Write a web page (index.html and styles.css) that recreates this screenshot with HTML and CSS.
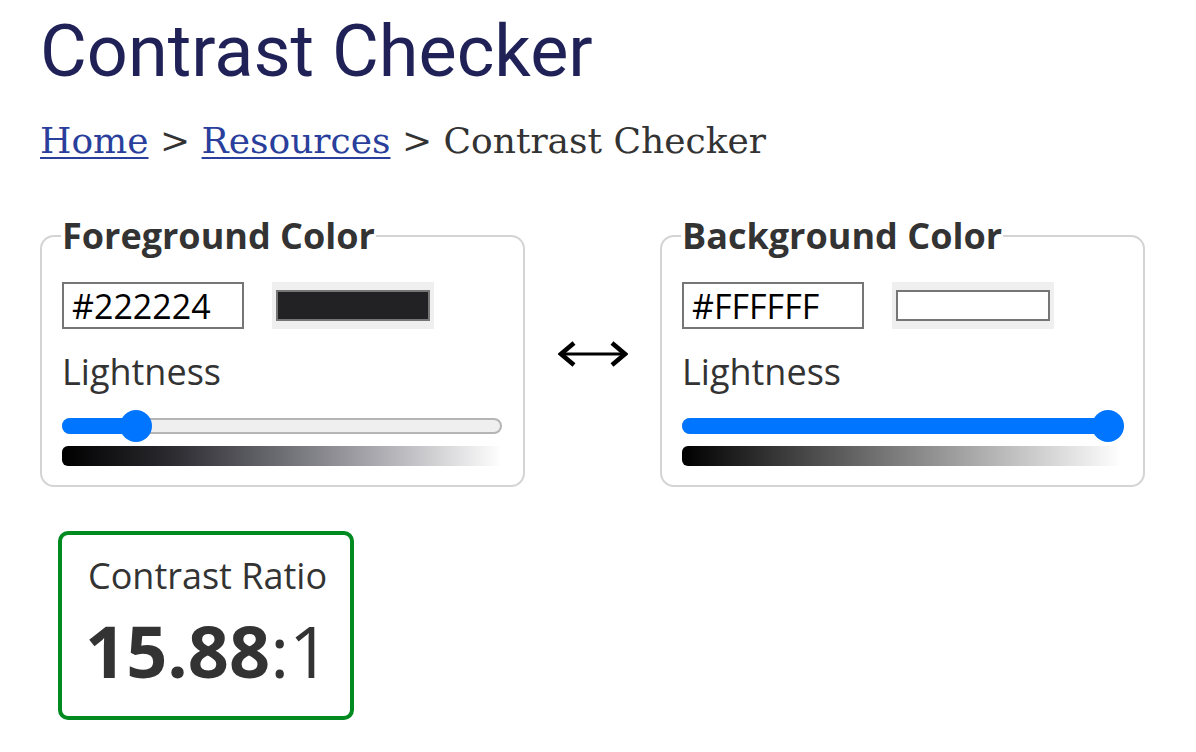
FILE: index.html
```html
<!DOCTYPE html>
<html lang="en">
<head>
<meta charset="utf-8">
<title>Contrast Checker</title>
<link rel="stylesheet" href="styles.css">
</head>
<body>
<main class="page">
  <h1 class="title">Contrast Checker</h1>
  <nav class="crumbs"><a href="#">Home</a> &gt; <a href="#">Resources</a> &gt; Contrast Checker</nav>

  <div class="pickers">
    <fieldset class="picker">
      <legend>Foreground Color</legend>
      <div class="row">
        <input class="hex" type="text" value="#222224">
        <span class="swatch-wrap"><span class="swatch fg"></span></span>
      </div>
      <div class="label">Lightness</div>
      <div class="slider">
        <div class="fill" style="width: 72px"></div>
        <div class="thumb" style="left: 56px"></div>
      </div>
      <div class="grad grad-fg"></div>
    </fieldset>

    <div class="swap">
      <svg width="70" height="30" viewBox="0 0 70 30" aria-hidden="true">
        <path d="M4 15 H66" stroke="#000" stroke-width="3" fill="none"/>
        <path d="M16 4 L3 15 L16 26" stroke="#000" stroke-width="4.5" fill="none" stroke-linejoin="miter" stroke-linecap="butt"/>
        <path d="M54 4 L67 15 L54 26" stroke="#000" stroke-width="4.5" fill="none" stroke-linejoin="miter" stroke-linecap="butt"/>
      </svg>
    </div>

    <fieldset class="picker">
      <legend>Background Color</legend>
      <div class="row">
        <input class="hex" type="text" value="#FFFFFF">
        <span class="swatch-wrap"><span class="swatch bg"></span></span>
      </div>
      <div class="label">Lightness</div>
      <div class="slider">
        <div class="fill fill-full"></div>
        <div class="thumb" style="left: 408px"></div>
      </div>
      <div class="grad grad-bg"></div>
    </fieldset>
  </div>

  <div class="ratio">
    <div class="ratio-label">Contrast Ratio</div>
    <div class="ratio-value"><b>15.88</b>:1</div>
  </div>
</main>
</body>
</html>
```

FILE: styles.css
```css
html, body {
  margin: 0;
  padding: 0;
  background: #fff;
}

.page {
  padding: 8px 40px 0 40px;
  font-family: "Open Sans", sans-serif;
  color: #333;
}

.title {
  margin: 0;
  font-family: Roboto, sans-serif;
  font-weight: 400;
  font-size: 72px;
  line-height: 88px;
  color: #1f2157;
}

.crumbs {
  margin-top: 24px;
  font-family: "DejaVu Serif", serif;
  font-size: 36px;
  line-height: 42px;
  color: #333;
}

.crumbs a {
  color: #2a3f9c;
  text-decoration: underline;
  text-decoration-thickness: 2px;
  text-underline-offset: 4px;
}

.pickers {
  display: grid;
  grid-template-columns: 485px 135px 485px;
  align-items: start;
  margin-top: 52px;
}

.picker {
  margin: 0;
  min-width: 0;
  border: 2px solid #d4d4d4;
  border-radius: 14px;
  padding: 24px 20px 19px 20px;
}

.picker legend {
  padding: 0 1px;
  margin-left: -1px;
  font-weight: 700;
  font-size: 36px;
  line-height: 44px;
  color: #333;
}

.row {
  display: flex;
  align-items: center;
  gap: 28px;
}

.hex {
  box-sizing: border-box;
  width: 182px;
  height: 47px;
  margin: 0;
  border: 2px solid #767676;
  border-radius: 0;
  padding: 0 8px;
  font-family: "Open Sans", sans-serif;
  font-size: 34px;
  color: #000;
  background: #fff;
}

.swatch-wrap {
  box-sizing: border-box;
  width: 162px;
  height: 47px;
  background: #efefef;
  padding: 8px 4px;
  display: flex;
}

.swatch {
  flex: 1;
  border: 2px solid #767676;
}

.swatch.fg { background: #222224; }
.swatch.bg { background: #ffffff; }

.label {
  margin-top: 21px;
  font-size: 36px;
  line-height: 44px;
  color: #333;
}

.slider {
  position: relative;
  margin-top: 24px;
  width: 440px;
  height: 16px;
  box-sizing: border-box;
  border: 2px solid #b5b5b5;
  border-radius: 8px;
  background: #efefef;
}

.fill {
  position: absolute;
  left: -2px;
  top: -2px;
  bottom: -2px;
  border-radius: 8px;
  background: #0075ff;
}

.fill-full {
  right: -2px;
}

.thumb {
  position: absolute;
  top: 50%;
  width: 32px;
  height: 32px;
  margin-top: -16px;
  border-radius: 50%;
  background: #0075ff;
}

.grad {
  margin-top: 12px;
  width: 440px;
  height: 20px;
  border-radius: 6px 0 0 6px;
}

.grad-fg {
  background: linear-gradient(to right, #000 0%, #2b2b30 25%, #6d6d74 50%, #b4b4b9 75%, #fff 100%);
}

.grad-bg {
  background: linear-gradient(to right, #000 0%, #fff 100%);
}

.swap {
  display: flex;
  justify-content: center;
  padding-top: 125px;
}

.ratio {
  box-sizing: border-box;
  width: 296px;
  height: 189px;
  margin: 44px 0 0 18px;
  border: 4px solid #008a1f;
  border-radius: 10px;
  padding: 19px 0 0 26px;
}

.ratio-label {
  font-size: 36px;
  line-height: 44px;
  color: #333;
}

.ratio-value {
  margin-left: -3px;
  font-size: 72px;
  line-height: 104px;
  color: #333;
}

.ratio-value b {
  font-weight: 700;
}
```
